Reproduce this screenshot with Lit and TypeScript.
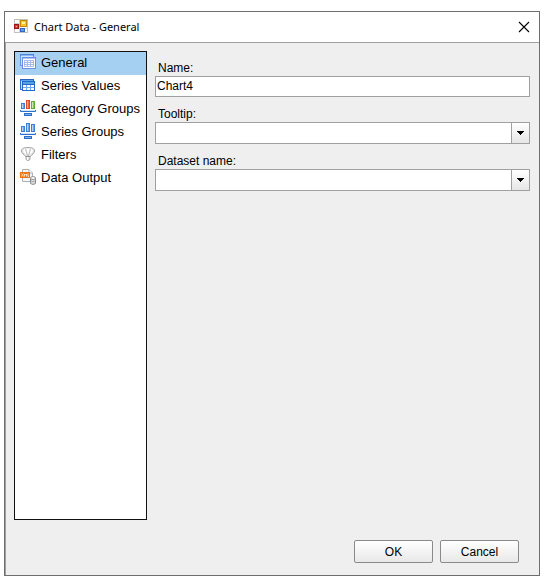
import { LitElement, html, css, svg, type TemplateResult } from "lit";
import { customElement, state } from "lit/decorators.js";
import { classMap } from "lit/directives/class-map.js";

const icon = (content: TemplateResult) =>
  html`<svg width="16" height="16" viewBox="0 0 16 16" aria-hidden="true">${content}</svg>`;

const generalIcon = icon(svg`
  <rect x="0.5" y="0.5" width="13" height="11" fill="#d3e5fb" stroke="#6496e6"/>
  <rect x="0" y="0" width="14" height="2" fill="#4c82dc"/>
  <rect x="1" y="1" width="12" height="1" fill="#8db6f2"/>
  <rect x="2.5" y="3.5" width="13" height="11" fill="#fff" stroke="#6a8fe2"/>
  <rect x="3" y="4" width="12" height="1" fill="#a9c4f4"/>
  <path d="M4.5 6.5h9v6h-9zM4.5 8.5h9M4.5 10.5h9M7.5 6.5v6M10.5 6.5v6" fill="none" stroke="#a3b9ee"/>
`);

const valuesIcon = icon(svg`
  <rect x="0.5" y="2.5" width="13" height="10" fill="#c8e2fb" stroke="#2a6fca"/>
  <rect x="0" y="2" width="14" height="2" fill="#2765bd"/>
  <rect x="1" y="3" width="12" height="1" fill="#62a4ea"/>
  <rect x="2.5" y="4.5" width="12" height="9" fill="#fff" stroke="#2468c4"/>
  <rect x="3" y="5" width="11" height="2" fill="#5c9fe8"/>
  <path d="M3 7.5h11" stroke="#2468c4"/>
  <path d="M3 10.5h11M6.5 8v5M10.5 8v5" fill="none" stroke="#6fabeb"/>
`);

const bar = (x: number, y: number, edge: string, fill: string, shine: string) => svg`
  <rect x=${x + 0.5} y=${y + 0.5} width="3" height=${8 - y} fill=${fill} stroke=${edge}/>
  <rect x=${x + 1} y=${y + 1} width="1" height=${7 - y} fill=${shine}/>`;

const blue = ["#3c80dc", "#6aa6f2", "#b5d6fb"] as const;
const red = ["#d84a24", "#ee6c40", "#f9b091"] as const;
const green = ["#5cae34", "#7ccb50", "#c4efa6"] as const;
type Tone = readonly [string, string, string];

const chartIcon = (a: Tone, b: Tone, c: Tone) => icon(svg`
  ${bar(1, 3, ...a)}${bar(6, 0, ...b)}${bar(11, 1, ...c)}
  <path d="M0.5 10V11.5H15.5V10" fill="none" stroke="#2f6fc8"/>
  <rect x="1" y="10" width="14" height="1" fill="#d4e5fa"/>
  <rect x="4.5" y="13.5" width="7" height="2" fill="#79aff2" stroke="#2f6fc8"/>
`);

const filterIcon = icon(svg`
  <path d="M1.500 5C1.500 2.500 4 1.500 8 1.500S14.500 2.500 14.500 5C14.500 7 12 9 10 10.500V13.500Q8 15.500 6 13.500V10.500C4 9 1.500 7 1.500 5Z" fill="#e9e9e9" stroke="#a0a0a0"/>
  <path d="M3.500 5.500Q3 3 5 2.500L7 9.500ZM12.500 5.500Q13 3 11 2.500L9 9.500ZM6.500 2.500H9.500L8 9Z" fill="#fff"/>
  <path d="M5.500 3L7.500 10M10.500 3L8.500 10" stroke="#c0c0c0" fill="none"/>
  <rect x="6" y="10" width="4" height="1" fill="#8f8f8f"/>
  <rect x="7" y="11" width="1" height="3" fill="#fff"/>
`);

const outputIcon = icon(svg`
  <path d="M2.500 0.500H9L12.500 4V12.500H2.500Z" fill="#f5f5f5" stroke="#b1b1b1"/>
  <path d="M9 0.500V4H12.500" fill="#fff" stroke="#b1b1b1"/>
  <rect x="0" y="3" width="10" height="6" fill="#f07412"/>
  <path d="M1.500 4.500L3.500 7.500M3.500 4.500L1.500 7.500M4.500 7.500V5L5.500 6L6.500 5V7.500M8 4.500V7.500H9" fill="none" stroke="#ffe0c2"/>
  <path d="M10.500 9V14.500Q13 16.500 15.500 14.500V9Z" fill="#dedede" stroke="#8c8c8c"/>
  <ellipse cx="13" cy="9" rx="2.500" ry="1.500" fill="#fafafa" stroke="#999"/>
  <path d="M11 12Q13 13.500 15 12" fill="none" stroke="#aaa"/>
`);

const pages = [
  { name: "General", icon: generalIcon },
  { name: "Series Values", icon: valuesIcon },
  { name: "Category Groups", icon: chartIcon(blue, red, green) },
  { name: "Series Groups", icon: chartIcon(blue, blue, blue) },
  { name: "Filters", icon: filterIcon },
  { name: "Data Output", icon: outputIcon },
];

@customElement("app-root")
export class AppRoot extends LitElement {
  @state() private page = "General";

  static styles = css`
    :host {
      display: flex;
      box-sizing: border-box;
      min-height: 100vh;
      padding: 11px 7px 5px 4px;
      background: #fff;
      color: #000;
      font: 12px/16px "Liberation Sans", Arial, sans-serif;
    }
    * { box-sizing: border-box; }
    button, input, select { font: inherit; color: inherit; margin: 0; }
    svg { display: block; flex: none; }
    .dialog {
      flex: 1;
      display: flex;
      flex-direction: column;
      border: 1px solid #6e6e6e;
    }
    .titlebar {
      display: flex;
      align-items: center;
      height: 30px;
      padding: 0 9px 1px;
      gap: 5px;
    }
    .title {
      flex: 1;
      margin: 0;
      font: 11px/16px "Noto Sans", "Open Sans", sans-serif;
    }
    .close { padding: 0; border: 0; background: none; }
    .body {
      flex: 1;
      display: flex;
      flex-direction: column;
      gap: 20px;
      padding: 8px 9px 12px 8px;
      border-top: 1px solid #a0a0a0;
      border-left: 1px solid #a0a0a0;
      background: #efefef;
    }
    .content { flex: 1; display: flex; gap: 8px; }
    .pages {
      flex: none;
      width: 133px;
      border: 1px solid #111;
      background: #fff;
    }
    .page {
      display: flex;
      align-items: flex-start;
      gap: 5px;
      width: 100%;
      height: 23px;
      padding: 2px 0 0 5px;
      border: 0;
      background: none;
      font-size: 13px;
      line-height: 18px;
      white-space: nowrap;
    }
    .selected { background: #a6d0f1; }
    .fields {
      flex: 1;
      display: flex;
      flex-direction: column;
      gap: 9px;
      padding-top: 9px;
    }
    .field { display: flex; flex-direction: column; }
    .label { padding-left: 3px; }
    .box { position: relative; }
    .control {
      display: block;
      width: 100%;
      height: 21px;
      padding: 0 1px 2px;
      border: 1px solid #a0a0a0;
      border-radius: 0;
      background: #fff;
      appearance: none;
      outline: none;
    }
    .drop { height: 22px; }
    .arrow {
      position: absolute;
      inset: 0 0 0 auto;
      display: flex;
      align-items: center;
      justify-content: center;
      width: 19px;
      border: 1px solid #a0a0a0;
      background: linear-gradient(#fff, #e6e6e6);
      pointer-events: none;
    }
    .actions {
      display: flex;
      justify-content: flex-end;
      gap: 7px;
      padding-right: 11px;
    }
    .action {
      width: 79px;
      height: 23px;
      padding: 0;
      border: 1px solid #8a8a8a;
      border-radius: 2px;
      background: linear-gradient(#fff, #e8e8e8);
    }
  `;

  private dropDown(id: string, label: string) {
    return html`
      <div class="field">
        <label class="label" for=${id}>${label}</label>
        <div class="box">
          <select class="control drop" id=${id}><option></option></select>
          <span class="arrow">
            <svg width="7" height="4" viewBox="0 0 7 4" aria-hidden="true"><path d="M0 0h7v1h-1v1h-1v1h-1v1h-1v-1h-1v-1h-1v-1h-1z"/></svg>
          </span>
        </div>
      </div>`;
  }

  render() {
    return html`
      <section class="dialog" role="dialog" aria-labelledby="title">
        <header class="titlebar">
          <svg width="15" height="15" viewBox="0 0 15 15" aria-hidden="true">
            <rect x="0.5" y="0.5" width="13" height="13" fill="#fff" stroke="#c0c0c0"/>
            <path d="M5.500 1V14M1 9.500H14M1 4.500H5" stroke="#cfcfcf"/>
            <rect x="6.500" y="1.500" width="6" height="6" fill="#f6c727" stroke="#c78a08"/>
            <rect x="8" y="3" width="3" height="2" fill="#fff0a2"/>
            <rect x="0.500" y="5.500" width="4" height="4" fill="#dd3e2c" stroke="#9e1717"/>
            <rect x="2" y="7" width="1" height="1" fill="#ffb5a8"/>
            <rect x="6.500" y="9.500" width="4" height="3" fill="#5b9bf2" stroke="#3468c4"/>
          </svg>
          <h1 class="title" id="title">Chart Data - General</h1>
          <button class="close" aria-label="Close">
            <svg width="12" height="12" viewBox="0 0 12 12"><path d="M1 1L11 11M11 1L1 11" fill="none" stroke="#000" stroke-width="1.100"/></svg>
          </button>
        </header>
        <div class="body">
          <div class="content">
            <nav class="pages">
              ${pages.map((p) => html`
                <button
                  class=${classMap({ page: true, selected: p.name === this.page })}
                  @click=${() => (this.page = p.name)}
                >${p.icon}<span>${p.name}</span></button>`)}
            </nav>
            <div class="fields">
              <div class="field">
                <label class="label" for="name">Name:</label>
                <input class="control" id="name" type="text" value="Chart4">
              </div>
              ${this.dropDown("tooltip", "Tooltip:")}
              ${this.dropDown("dataset", "Dataset name:")}
            </div>
          </div>
          <footer class="actions">
            <button class="action">OK</button>
            <button class="action">Cancel</button>
          </footer>
        </div>
      </section>`;
  }
}
